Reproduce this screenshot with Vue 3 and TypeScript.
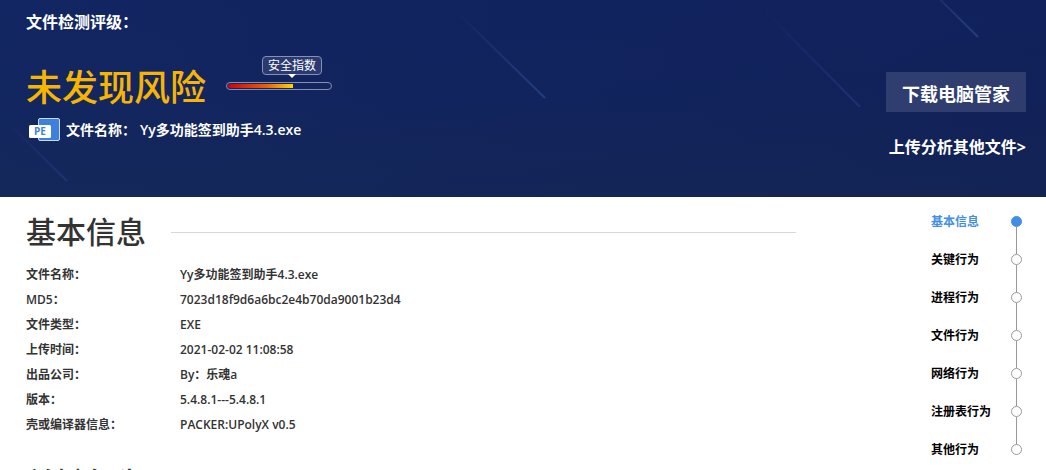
<script setup lang="ts">
interface Row {
  label: string
  value: string
}

const fileName = 'Yy多功能签到助手4.3.exe'

const rows: Row[] = [
  { label: '文件名称：', value: fileName },
  { label: 'MD5：', value: '7023d18f9d6a6bc2e4b70da9001b23d4' },
  { label: '文件类型：', value: 'EXE' },
  { label: '上传时间：', value: '2021-02-02 11:08:58' },
  { label: '出品公司：', value: 'By：乐魂a' },
  { label: '版本：', value: '5.4.8.1---5.4.8.1' },
  { label: '壳或编译器信息：', value: 'PACKER:UPolyX v0.5' },
]

const sections: string[] = ['基本信息', '关键行为', '进程行为', '文件行为', '网络行为', '注册表行为', '其他行为']
const active = 0
const safety = 64
</script>

<template>
  <div class="page" lang="zh-CN">
    <header class="banner">
      <svg class="streaks" width="1046" height="197" aria-hidden="true">
        <defs>
          <linearGradient id="streak" x1="0" y1="0" x2="1" y2="1">
            <stop offset="0" stop-color="#2c4a90" stop-opacity="0" />
            <stop offset="1" stop-color="#2c4688" stop-opacity="0.75" />
          </linearGradient>
          <linearGradient id="faint" x1="0" y1="0" x2="1" y2="1">
            <stop offset="0" stop-color="#2b3a88" stop-opacity="0" />
            <stop offset="1" stop-color="#2b3a88" stop-opacity="0.55" />
          </linearGradient>
        </defs>
        <path d="M455 10 L545 98" stroke="url(#streak)" stroke-width="2" />
        <path d="M905 -35 L978 37" stroke="url(#streak)" stroke-width="2" />
        <path d="M760 6 L860 107" stroke="url(#faint)" stroke-width="2" />
        <path d="M5 120 L67 181" stroke="url(#faint)" stroke-width="2" />
      </svg>

      <div class="summary">
        <p class="caption">文件检测评级：</p>
        <div class="verdict">
          <h1>未发现风险</h1>
          <div class="gauge">
            <span class="tip">安全指数</span>
            <div class="track" role="img" aria-label="安全指数">
              <div class="fill" :style="{ width: safety + '%' }"></div>
            </div>
          </div>
        </div>
        <p class="file">
          <svg class="pe" width="32" height="24" viewBox="0 0 32 24" aria-hidden="true">
            <rect x="9.5" y="0.5" width="21" height="22" rx="1.5" fill="#3e80de" stroke="#c9dcf7" />
            <rect x="0" y="7" width="22" height="13" rx="1.5" fill="#fff" />
            <text x="11" y="17" text-anchor="middle">PE</text>
          </svg>
          <span>文件名称：</span>
          <span class="name">{{ fileName }}</span>
        </p>
      </div>

      <div class="actions">
        <button type="button" class="download">下载电脑管家</button>
        <a href="#upload" class="upload">上传分析其他文件&gt;</a>
      </div>
    </header>

    <div class="body">
      <main class="content">
        <section id="section-0">
          <h2>基本信息</h2>
          <table>
            <tbody>
              <tr v-for="row in rows" :key="row.label">
                <th scope="row">{{ row.label }}</th>
                <td>{{ row.value }}</td>
              </tr>
            </tbody>
          </table>
        </section>
        <section id="section-1">
          <h2>关键行为</h2>
        </section>
      </main>

      <nav class="steps">
        <a
          v-for="(name, i) in sections"
          :key="name"
          :href="'#section-' + i"
          :class="{ active: i === active }"
        >
          <span>{{ name }}</span>
          <i class="dot"></i>
        </a>
      </nav>
    </div>
  </div>
</template>

<style>
html,
body {
  margin: 0;
  background: #fff;
}

html {
  height: 100%;
  overflow: hidden;
}
</style>

<style scoped>
.page {
  height: 100vh;
  overflow: hidden;
  font-family: 'Open Sans', 'Noto Sans CJK SC', sans-serif;
  font-size: 12px;
  font-weight: 600;
  color: #333;
}

p,
h1,
h2 {
  margin: 0;
}

.banner {
  position: relative;
  display: flex;
  justify-content: space-between;
  padding: 10px 20px 38px 26px;
  overflow: hidden;
  color: #fff;
  background: linear-gradient(100deg, rgba(20, 44, 100, 0.3), rgba(15, 28, 78, 0.35)),
    linear-gradient(180deg, #112362 0%, #12245f 50%, #152757 100%);
}

.streaks {
  position: absolute;
  top: 0;
  left: 0;
}

.summary,
.actions {
  position: relative;
}

.caption {
  font-size: 16px;
  line-height: 24px;
  font-weight: 700;
}

.verdict {
  display: flex;
  gap: 20px;
  padding-top: 20px;
}

h1 {
  padding-top: 4px;
  font-size: 36px;
  line-height: 60px;
  font-weight: 500;
  color: #f7b500;
}

.gauge {
  display: flex;
  flex-direction: column;
  width: 106px;
  padding-top: 2px;
}

.tip {
  position: relative;
  align-self: flex-end;
  box-sizing: border-box;
  width: 60px;
  margin-right: 10px;
  border: 1px solid #8590b4;
  border-radius: 4px;
  background: #2a3a70;
  font-weight: 400;
  line-height: 17px;
  text-align: center;
}

.tip::after {
  content: '';
  position: absolute;
  top: 100%;
  left: 25px;
  border: 4px solid transparent;
  border-top-color: #fff;
  border-bottom: 0;
}

.track {
  box-sizing: border-box;
  height: 8px;
  margin-top: 7px;
  padding: 1px;
  border: 1px solid #8590b4;
  border-radius: 4px;
}

.fill {
  height: 4px;
  border-radius: 2px 0 0 2px;
  background: linear-gradient(90deg, #d0000a, #f06000 60%, #ffd800);
}

.file {
  display: flex;
  align-items: center;
  padding-left: 3px;
  font-size: 14px;
  line-height: 24px;
  font-weight: 700;
}

.pe {
  margin-right: 5px;
}

.pe text {
  font: 700 10px 'Open Sans', sans-serif;
  fill: #3e80de;
}

.name {
  margin-left: 4px;
  font-weight: 600;
}

.actions {
  display: flex;
  flex-direction: column;
  align-items: flex-end;
  padding-top: 62px;
}

.download {
  height: 40px;
  padding: 4px 16px 0;
  border: 0;
  background: rgba(255, 255, 255, 0.13);
  color: #fff;
  font: inherit;
  font-size: 18px;
  font-weight: 700;
  line-height: 36px;
  cursor: pointer;
}

.upload {
  margin-top: 23px;
  color: #fff;
  font-size: 16px;
  font-weight: 700;
  line-height: 24px;
  text-decoration: none;
}

.body {
  display: flex;
  justify-content: space-between;
  padding: 13px 24px 0 26px;
}

.content {
  flex: 0 1 770px;
}

h2 {
  display: flex;
  align-items: center;
  gap: 25px;
  font-size: 30px;
  line-height: 44px;
  font-weight: 500;
}

h2::after {
  content: '';
  flex: 1;
  height: 1px;
  background: #d8d8d8;
}

table {
  width: 100%;
  margin: 8px 0 24px;
  border-collapse: collapse;
}

th,
td {
  height: 25px;
  padding: 0;
  font-weight: 600;
  line-height: 25px;
  text-align: left;
}

th {
  width: 154px;
}

.steps {
  width: 91px;
}

.steps a {
  position: relative;
  display: flex;
  align-items: center;
  justify-content: space-between;
  height: 22px;
  margin-bottom: 16px;
  color: #000;
  font-weight: 700;
  text-decoration: none;
}

.steps .active {
  color: #428ee6;
}

.dot {
  box-sizing: border-box;
  width: 11px;
  height: 11px;
  border: 1px solid #999;
  border-radius: 50%;
}

.active .dot {
  border-color: #428ee6;
  background: #428ee6;
}

.steps a:not(:last-child)::after {
  content: '';
  position: absolute;
  top: 17px;
  right: 5px;
  width: 1px;
  height: 27px;
  background: #999;
}
</style>
